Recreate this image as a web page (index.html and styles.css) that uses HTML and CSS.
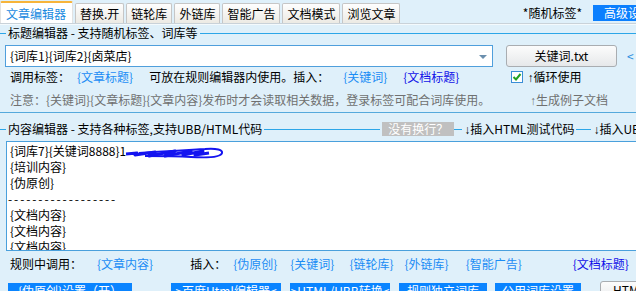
FILE: index.html
```html
<!DOCTYPE html>
<html lang="zh">
<head>
    <meta charset="UTF-8">
    <title>文章编辑器</title>
    <link rel="stylesheet" href="styles.css">
</head>
<body>
    <div class="tabs">
        <div class="tab active">文章编辑器</div>
        <div class="tab">替换.开</div>
        <div class="tab">链轮库</div>
        <div class="tab">外链库</div>
        <div class="tab">智能广告</div>
        <div class="tab">文档模式</div>
        <div class="tab">浏览文章</div>
        <div class="tab-tag">*随机标签*</div>
        <div class="adv">高级设置</div>
    </div>

    <!-- 标题编辑器 -->
    <div class="group">
        <div class="legend">
            <span class="line lead"></span>
            <span class="legend-text">标题编辑器 - 支持随机标签、词库等</span>
            <span class="line"></span>
        </div>
        <div class="input-row">
            <div class="combo">{词库1}{词库2}{卤菜店}<span class="arrow"></span></div>
            <button class="btn">关键词.txt</button>
            <span class="prev">&lt;</span>
        </div>
        <div class="label-row">
            <span>调用标签：</span>
            <span class="link g1">{文章标题}</span>
            <span class="g2">可放在规则编辑器内使用。插入：</span>
            <span class="link g3">{关键词}</span>
            <span class="link dark g4">{文档标题}</span>
            <span class="check g5">
                <svg width="12" height="12" viewBox="0 0 12 12">
                    <rect x="0.5" y="0.5" width="11" height="11" fill="#fff" stroke="#3a8ed6"/>
                    <path d="M2.5 6 L5 8.5 L9.5 3" fill="none" stroke="#21a121" stroke-width="2"/>
                </svg>
                <span class="check-text"><span class="arr">↑</span>循环使用</span>
            </span>
        </div>
        <div class="note-row">
            <span>注意：{关键词}{文章标题}{文章内容}发布时才会读取相关数据，登录标签可配合词库使用。</span>
            <span class="note-right"><span class="arr">↑</span>生成例子文档</span>
        </div>
    </div>

    <!-- 内容编辑器 -->
    <div class="legend legend2">
        <span class="line lead"></span>
        <span class="legend-text">内容编辑器 - 支持各种标签,支持UBB/HTML代码</span>
        <span class="line mid"></span>
        <span class="nobreak">没有换行？</span>
        <span class="line gap"></span>
        <span class="legend-text"><span class="arr">↓</span>插入HTML测试代码</span>
        <span class="line gap2"></span>
        <span class="legend-text"><span class="arr">↓</span>插入UBB测试代码</span>
    </div>

    <div class="editor">
        <div>{词库7}{关键词8888}1</div>
        <div>{培训内容}</div>
        <div>{伪原创}</div>
        <div class="dashes">------------------</div>
        <div>{文档内容}</div>
        <div>{文档内容}</div>
        <div>{文档内容}</div>
        <svg class="scribble" width="100" height="14" viewBox="0 0 100 14">
            <path d="M1 8 L12 7 L10 9 L30 6 L24 10 L50 5 L40 10 L66 5 L58 9 L78 5 L70 9 L84 7" fill="none" stroke="#1414f0" stroke-width="3" stroke-linejoin="round"/>
            <path d="M14 7 C40 5 62 4 80 3 C92 2 98 4 97 7 C96 11 84 12 66 11 C50 10 30 10 20 10" fill="none" stroke="#1414f0" stroke-width="2"/>
        </svg>
    </div>

    <div class="insert-row">
        <span>规则中调用：</span>
        <span class="link i1">{文章内容}</span>
        <span class="i2">插入：</span>
        <span class="link i3">{伪原创}</span>
        <span class="link i4">{关键词}</span>
        <span class="link i5">{链轮库}</span>
        <span class="link i6">{外链库}</span>
        <span class="link i7">{智能广告}</span>
        <span class="link dark i8">{文档标题}</span>
    </div>

    <div class="btn-row">
        <span class="bluebtn b1">{伪原创}设置（开）</span>
        <span class="bluebtn b2">&gt;百度Html编辑器&lt;</span>
        <span class="bluebtn b3">&gt;HTML/UBB转换&lt;</span>
        <span class="bluebtn b4">规则独立词库</span>
        <span class="bluebtn b5">公用词库设置</span>
        <span class="graybtn">HTML格式</span>
    </div>
</body>
</html>
```

FILE: styles.css
```css
body {
    margin: 0;
    width: 636px;
    height: 291px;
    overflow: hidden;
    background: #dff0fa;
    font-family: "Noto Sans CJK SC", sans-serif;
    font-size: 12px;
    line-height: 16px;
    color: #000;
}

.arr {
    font-family: "Liberation Sans", sans-serif;
}

/* 顶部标签页 */
.tabs {
    display: flex;
    align-items: flex-end;
    height: 23px;
    border-bottom: 1px solid #c9d2d9;
    box-shadow: 0 1px 0 #f4fafd;
    white-space: nowrap;
}

.tab {
    flex-shrink: 0;
    height: 19px;
    line-height: 19px;
    padding: 0 4px;
    margin-right: 2px;
    border: 1px solid #c6c6c6;
    border-bottom: none;
    border-radius: 2px 2px 0 0;
    background: linear-gradient(#fefefe, #eceae4);
}

.tab.active {
    height: 20px;
    line-height: 21px;
    padding: 0 6px 0 5px;
    color: #1a8ae0;
    background: #fff;
    border-color: #e2e2e2;
    border-top: 2px solid #f7b43a;
}

.tab-tag {
    margin-left: auto;
    margin-right: 11px;
    align-self: center;
    padding-top: 2px;
}

.adv {
    flex-shrink: 0;
    align-self: center;
    margin-top: 2px;
    width: 32px;
    height: 16px;
    line-height: 16px;
    padding-left: 11px;
    background: #0a7ffe;
    color: #fff;
    overflow: hidden;
}

/* 分组标题线 */
.legend {
    display: flex;
    align-items: center;
    height: 18px;
    white-space: nowrap;
}

.legend > * {
    flex-shrink: 0;
}

.line {
    flex: 1;
    height: 1px;
    background: #2ca6e8;
}

.line.lead {
    flex: none;
    width: 6px;
    margin-right: 2px;
}

.legend-text {
    margin-right: 2px;
}

.group {
    padding-bottom: 4px;
    border-bottom: 1px solid #55a9dc;
}

.input-row {
    display: flex;
    align-items: center;
    margin-top: 3px;
    height: 22px;
}

.combo {
    position: relative;
    box-sizing: border-box;
    margin-left: 5px;
    width: 488px;
    height: 22px;
    line-height: 20px;
    padding-left: 4px;
    background: #fff;
    border: 1px solid #4f9fdc;
}

.arrow {
    position: absolute;
    right: 5px;
    top: 9px;
    border-left: 4px solid transparent;
    border-right: 4px solid transparent;
    border-top: 4px solid #6b8fae;
}

.btn {
    box-sizing: border-box;
    margin-left: 13px;
    width: 111px;
    height: 22px;
    padding: 0;
    font: inherit;
    color: #000;
    background: linear-gradient(#fcfcfc, #e6e8ea);
    border: 1px solid #a9adb1;
    border-radius: 3px;
}

.prev {
    margin-left: 10px;
    color: #2a8ee0;
}

.label-row {
    display: flex;
    align-items: center;
    margin-top: 2px;
    height: 16px;
    padding-left: 10px;
    white-space: nowrap;
}

.link {
    color: #1a8cf5;
}

.link.dark {
    color: #1010e8;
}

.g1 { margin-left: 7px; }
.g2 { margin-left: 16px; }
.g3 { margin-left: 14px; }
.g4 { margin-left: 16px; }
.g5 { margin-left: 52px; }

.check {
    display: flex;
    align-items: center;
}

.check-text {
    margin-left: 4px;
}

.note-row {
    display: flex;
    margin-top: 7px;
    height: 16px;
    padding-left: 10px;
    color: #707070;
    white-space: nowrap;
}

.note-right {
    margin-left: auto;
    margin-right: 28px;
}

/* 内容编辑器 */
.legend2 {
    margin-top: 8px;
    height: 16px;
}

.line.mid {
    flex: none;
    width: 116px;
    margin-right: 0;
}

.nobreak {
    height: 14px;
    line-height: 14px;
    padding: 0 6px;
    margin-left: 2px;
    background: #c0c0c0;
    color: #fff;
}

.line.gap {
    flex: none;
    width: 8px;
    margin-right: 2px;
}

.line.gap2 {
    flex: none;
    width: 15px;
    margin-right: 2px;
}

.editor {
    position: relative;
    box-sizing: border-box;
    margin-top: 4px;
    margin-left: 6px;
    width: 630px;
    height: 110px;
    padding: 1px 0 0 3px;
    background: #fff;
    border: 1px solid #4aa0dc;
    border-right: none;
    overflow: hidden;
    white-space: nowrap;
}

.dashes {
    margin-left: -2px;
    letter-spacing: 1.9px;
}

.scribble {
    position: absolute;
    left: 118px;
    top: 4px;
}

.insert-row {
    display: flex;
    align-items: center;
    margin-top: 5px;
    height: 16px;
    padding-left: 10px;
    white-space: nowrap;
}

.i1 { margin-left: 15px; }
.i2 { margin-left: 37px; }
.i3 { margin-left: 7px; }
.i4 { margin-left: 13px; }
.i5 { margin-left: 15px; }
.i6 { margin-left: 11px; }
.i7 { margin-left: 17px; }
.i8 { margin-left: 51px; }

.btn-row {
    display: flex;
    margin-top: 11px;
    white-space: nowrap;
}

.btn-row > * {
    flex-shrink: 0;
}

.bluebtn {
    height: 18px;
    line-height: 16px;
    text-align: center;
    background: #0a84ff;
    color: #fff;
}

.b1 { margin-left: 8px; width: 124px; }
.b2 { margin-left: 39px; width: 110px; }
.b3 { margin-left: 9px; width: 100px; }
.b4 { margin-left: 9px; width: 88px; }
.b5 { margin-left: 8px; width: 86px; }

.graybtn {
    box-sizing: border-box;
    margin-left: 19px;
    margin-top: -2px;
    width: 60px;
    height: 22px;
    padding-left: 12px;
    border: 1px solid #a9adb1;
    border-radius: 3px;
    background: linear-gradient(#fcfcfc, #e6e8ea);
}
```
